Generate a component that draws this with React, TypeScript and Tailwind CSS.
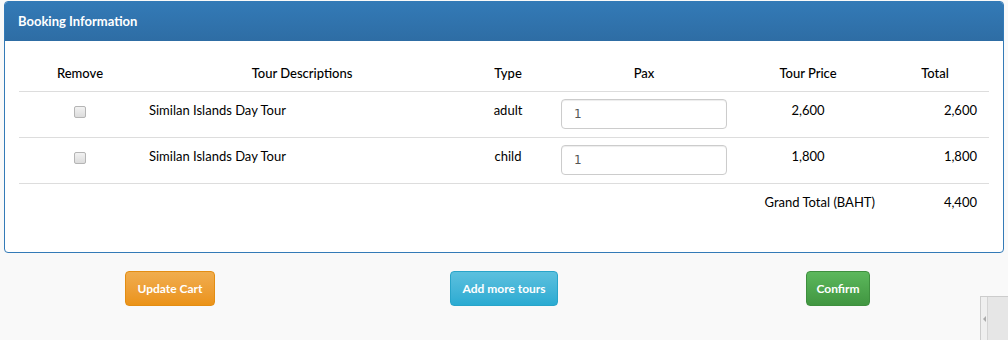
import React, { useState } from "react";

type Item = { id: number; name: string; type: string; pax: string; price: number };

const initial: Item[] = [
  { id: 1, name: "Similan Islands Day Tour", type: "adult", pax: "1", price: 2600 },
  { id: 2, name: "Similan Islands Day Tour", type: "child", pax: "1", price: 1800 },
];

const fmt = (n: number) => n.toLocaleString("en-US");

const App = () => {
  const [items, setItems] = useState(initial);
  const grand = items.reduce((s, i) => s + i.price * (parseInt(i.pax) || 0), 0);

  return (
    <div className="relative min-h-[340px] bg-[#f9f9f9] pt-px font-['Lato',sans-serif] text-[13px] text-black">
      <div className="mx-1 rounded border border-[#337ab7] bg-white">
        <div className="h-[39px] rounded-t-[3px] bg-gradient-to-b from-[#337ab7] to-[#2e6da4] px-[13px] pt-[10px] text-[13px] font-bold text-white">
          Booking Information
        </div>
        <div className="px-[14px] pb-[32px] pt-[14px]">
          <table className="w-full border-collapse">
            <thead>
              <tr className="border-b border-[#ddd]">
                <th className="w-[122px] p-2 leading-5 font-medium">Remove</th>
                <th className="w-[322px] p-2 leading-5 font-medium">Tour Descriptions</th>
                <th className="w-[90px] p-2 leading-5 font-medium">Type</th>
                <th className="w-[182px] p-2 leading-5 font-medium">Pax</th>
                <th className="w-[146px] p-2 leading-5 font-medium">Tour Price</th>
                <th className="p-2 leading-5 font-medium">Total</th>
              </tr>
            </thead>
            <tbody>
              {items.map((it, idx) => (
                <tr key={it.id} className="border-b border-[#ddd] align-top">
                  <td className="p-2 text-center leading-5">
                    <input
                      type="checkbox"
                      className="mt-[6px] h-[12px] w-[12px] appearance-none rounded-[2px] border border-[#b5b5b5] bg-gradient-to-b from-[#f2f2f2] to-[#dcdcdc]"
                    />
                  </td>
                  <td className="p-2 leading-5">{it.name}</td>
                  <td className="p-2 text-center leading-5">{it.type}</td>
                  <td className="px-2 pb-2 pt-[7px]">
                    <input
                      value={it.pax}
                      onChange={(e) =>
                        setItems(items.map((x, j) => (j === idx ? { ...x, pax: e.target.value } : x)))
                      }
                      className="h-[30px] w-full rounded border border-[#ccc] px-3 font-['DejaVu_Sans',sans-serif] text-[12px] text-[#555] shadow-[inset_0_1px_1px_rgba(0,0,0,0.075)] outline-none"
                    />
                  </td>
                  <td className="p-2 text-center leading-5">{fmt(it.price)}</td>
                  <td className="py-2 pl-2 pr-3 text-right leading-5">
                    {fmt(it.price * (parseInt(it.pax) || 0))}
                  </td>
                </tr>
              ))}
              <tr>
                <td colSpan={4} />
                <td className="py-2 pl-2 pr-[6px] text-right leading-5">Grand Total (BAHT)</td>
                <td className="py-2 pl-2 pr-3 text-right leading-5">{fmt(grand)}</td>
              </tr>
            </tbody>
          </table>
        </div>
      </div>

      <div className="mt-[18px] grid grid-cols-3 justify-items-center px-[3px]">
        <button className="h-[35px] rounded border border-[#e38d13] bg-gradient-to-b from-[#f0ad4e] to-[#eb9316] px-[11px] text-[12px] font-bold text-white">
          Update Cart
        </button>
        <button className="h-[35px] rounded border border-[#28a4c9] bg-gradient-to-b from-[#5bc0de] to-[#2aabd2] px-[11px] text-[12px] font-bold text-white">
          Add more tours
        </button>
        <button className="h-[35px] rounded border border-[#3e8f3e] bg-gradient-to-b from-[#5cb85c] to-[#419641] px-[9px] text-[12px] font-bold text-white">
          Confirm
        </button>
      </div>

      <div className="absolute bottom-0 right-0 flex h-[44px] w-[28px] border-l border-t border-[#ccc] bg-[#e6e6e6]">
        <div className="flex w-[7px] items-center justify-center border-r border-[#d4d4d4] bg-[#efefef]">
          <div className="h-0 w-0 border-y-[3px] border-r-[3px] border-y-transparent border-r-[#aaa]" />
        </div>
      </div>
    </div>
  );
};

export default App;
